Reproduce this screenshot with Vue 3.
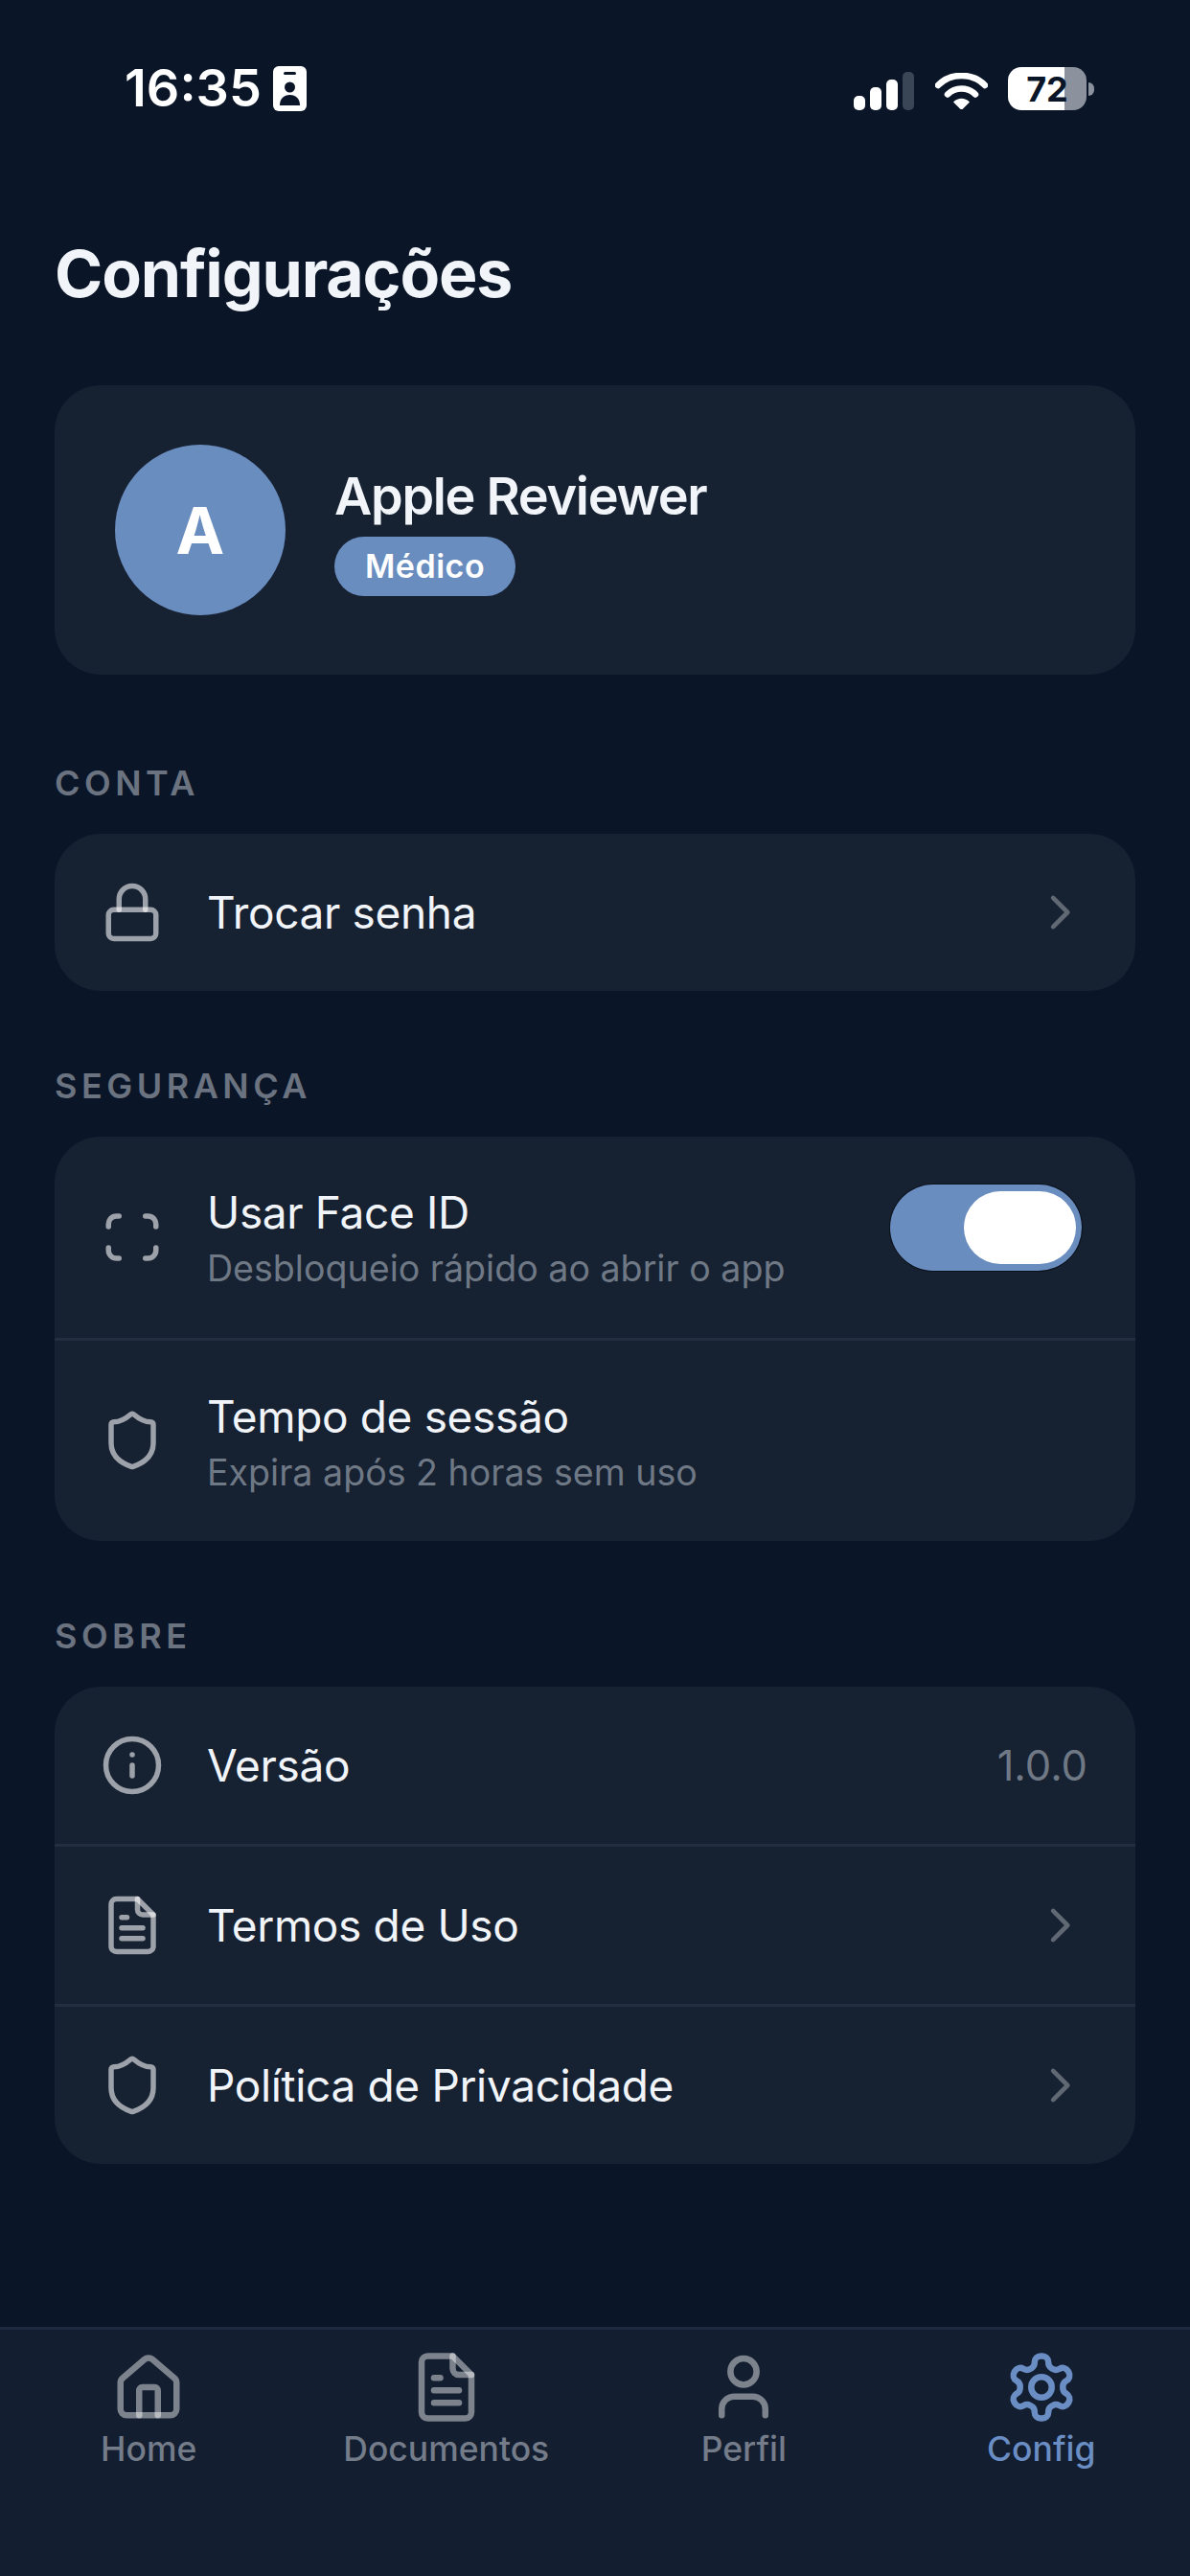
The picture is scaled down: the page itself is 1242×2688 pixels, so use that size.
<script setup>
const icons = {
  lock: ['M5 11h14a2 2 0 0 1 2 2v7a2 2 0 0 1-2 2H5a2 2 0 0 1-2-2v-7a2 2 0 0 1 2-2z', 'M7 11V7a5 5 0 0 1 10 0v4'],
  face: ['M3 8V7a3 3 0 0 1 3-3h1', 'M17 4h1a3 3 0 0 1 3 3v1', 'M21 16v1a3 3 0 0 1-3 3h-1', 'M7 20H6a3 3 0 0 1-3-3v-1'],
  shield: ['M20 13c0 5-3.5 7.5-7.66 8.95a1 1 0 0 1-.67-.01C7.5 20.5 4 18 4 13V6a1 1 0 0 1 1-1c2 0 4.5-1.2 6.24-2.72a1.17 1.17 0 0 1 1.52 0C14.51 3.81 17 5 19 5a1 1 0 0 1 1 1z'],
  info: ['M22 12a10 10 0 1 1-20 0 10 10 0 0 1 20 0z', 'M12 16v-4', 'M12 8h.01'],
  doc: ['M14 2H6a2 2 0 0 0-2 2v16a2 2 0 0 0 2 2h12a2 2 0 0 0 2-2V8z', 'M14 2v4a2 2 0 0 0 2 2h4', 'M10 9H8', 'M16 13H8', 'M16 17H8'],
  home: ['M3 10.6a2 2 0 0 1 .7-1.5l7-6a2 2 0 0 1 2.6 0l7 6a2 2 0 0 1 .7 1.5V19a2 2 0 0 1-2 2H5a2 2 0 0 1-2-2z', 'M9 21v-8a1 1 0 0 1 1-1h4a1 1 0 0 1 1 1v8'],
  user: ['M16.2 7a4.2 4.2 0 1 1-8.4 0 4.2 4.2 0 0 1 8.4 0z', 'M5 21v-2a4 4 0 0 1 4-4h6a4 4 0 0 1 4 4v2'],
  gear: ['M12.22 2h-.44a2 2 0 0 0-2 2v.18a2 2 0 0 1-1 1.73l-.43.25a2 2 0 0 1-2 0l-.15-.08a2 2 0 0 0-2.73.73l-.22.38a2 2 0 0 0 .73 2.73l.15.1a2 2 0 0 1 1 1.72v.51a2 2 0 0 1-1 1.74l-.15.09a2 2 0 0 0-.73 2.73l.22.38a2 2 0 0 0 2.73.73l.15-.08a2 2 0 0 1 2 0l.43.25a2 2 0 0 1 1 1.73V20a2 2 0 0 0 2 2h.44a2 2 0 0 0 2-2v-.18a2 2 0 0 1 1-1.73l.43-.25a2 2 0 0 1 2 0l.15.08a2 2 0 0 0 2.73-.73l.22-.39a2 2 0 0 0-.73-2.73l-.15-.08a2 2 0 0 1-1-1.74v-.5a2 2 0 0 1 1-1.74l.15-.09a2 2 0 0 0 .73-2.73l-.22-.38a2 2 0 0 0-2.73-.73l-.15.08a2 2 0 0 1-2 0l-.43-.25a2 2 0 0 1-1-1.73V4a2 2 0 0 0-2-2z', 'M15.3 12a3.3 3.3 0 1 1-6.6 0 3.3 3.3 0 0 1 6.6 0z'],
}

const sections = [
  { label: 'CONTA', rows: [{ icon: 'lock', title: 'Trocar senha', chevron: true }] },
  {
    label: 'SEGURANÇA',
    rows: [
      { icon: 'face', title: 'Usar Face ID', sub: 'Desbloqueio rápido ao abrir o app', toggle: true },
      { icon: 'shield', title: 'Tempo de sessão', sub: 'Expira após 2 horas sem uso' },
    ],
  },
  {
    label: 'SOBRE',
    rows: [
      { icon: 'info', title: 'Versão', value: '1.0.0' },
      { icon: 'doc', title: 'Termos de Uso', chevron: true },
      { icon: 'shield', title: 'Política de Privacidade', chevron: true },
    ],
  },
]

const tabs = [
  { icon: 'home', label: 'Home' },
  { icon: 'doc', label: 'Documentos' },
  { icon: 'user', label: 'Perfil' },
  { icon: 'gear', label: 'Config', active: true },
]
</script>

<template>
  <div class="page">
    <div class="status">
      <div class="status-left">
        <span class="time">16:35</span>
        <svg class="badge-id" width="35" height="47" viewBox="0 0 35 47">
          <rect width="35" height="47" rx="6" fill="#fff" />
          <rect x="11" y="6" width="13" height="3" rx="1.5" fill="#0a1628" />
          <circle cx="17.5" cy="22" r="5.5" fill="#0a1628" />
          <path d="M7 41c0-7 4-11 10.500-11S28 34 28 41z" fill="#0a1628" />
        </svg>
      </div>
      <div class="status-right">
        <svg width="63" height="40" viewBox="0 0 63 40">
          <rect x="0" y="25" width="12" height="15" rx="5" fill="#fff" />
          <rect x="17" y="16" width="12" height="24" rx="5" fill="#fff" />
          <rect x="34" y="8" width="12" height="32" rx="5" fill="#fff" />
          <rect x="51" y="0" width="12" height="40" rx="5" fill="#3a4656" />
        </svg>
        <svg class="wifi" width="55" height="38" viewBox="0 0 55 38">
          <path d="M3 13C16-0.500 39-0.500 52 13" fill="none" stroke="#fff" stroke-width="6.500" stroke-linecap="round" />
          <path d="M13 22.500c8-8 21-8 29 0" fill="none" stroke="#fff" stroke-width="6.500" stroke-linecap="round" />
          <path d="M19 30.500c5-5 12-5 17 0l-7 7a2 2 0 0 1-3 0z" fill="#fff" />
        </svg>
        <div class="battery">
          <div class="battery-body"><span>72</span></div>
          <div class="battery-cap"></div>
        </div>
      </div>
    </div>

    <main class="content">
      <h1 class="title">Configurações</h1>

      <div class="card profile">
        <div class="avatar">A</div>
        <div>
          <div class="name">Apple Reviewer</div>
          <span class="role">Médico</span>
        </div>
      </div>

      <section v-for="section in sections" :key="section.label" class="section">
        <div class="section-label">{{ section.label }}</div>
        <div class="card">
          <div v-for="row in section.rows" :key="row.title" class="row">
            <svg class="row-icon" viewBox="0 0 24 24" fill="none" stroke="#fff" stroke-opacity="0.58" stroke-width="2" stroke-linecap="round" stroke-linejoin="round">
              <path v-for="d in icons[row.icon]" :key="d" :d="d" />
            </svg>
            <div class="row-text">
              <div class="row-title">{{ row.title }}</div>
              <div v-if="row.sub" class="row-sub">{{ row.sub }}</div>
            </div>
            <div v-if="row.toggle" class="toggle"><div class="thumb"></div></div>
            <span v-if="row.value" class="row-value">{{ row.value }}</span>
            <svg v-if="row.chevron" class="chevron" viewBox="0 0 24 24" fill="none" stroke="#fff" stroke-opacity="0.32" stroke-width="1.7" stroke-linecap="round" stroke-linejoin="round">
              <path d="m9.500 17.500 5.500-5.500-5.500-5.500" />
            </svg>
          </div>
        </div>
      </section>
    </main>

    <nav class="tabbar">
      <div v-for="tab in tabs" :key="tab.label" class="tab" :class="{ active: tab.active }">
        <svg class="tab-icon" viewBox="0 0 24 24" fill="none" stroke="currentColor" :stroke-opacity="tab.active ? 1 : 0.45" stroke-width="2" stroke-linecap="round" stroke-linejoin="round">
          <path v-for="d in icons[tab.icon]" :key="d" :d="d" />
        </svg>
        <span class="tab-label">{{ tab.label }}</span>
      </div>
    </nav>
  </div>
</template>

<style>
html,
body {
  margin: 0;
  background: #0a1628;
}
</style>

<style scoped>
.page {
  height: 2688px;
  display: flex;
  flex-direction: column;
  background: #0a1628;
  color: #f1f4f8;
  font-family: Inter, "Liberation Sans", sans-serif;
}

.status {
  height: 138px;
  padding: 67px 100px 0 130px;
  box-sizing: border-box;
  display: flex;
  justify-content: space-between;
  align-items: flex-start;
}

.status-left {
  display: flex;
  align-items: center;
  gap: 12px;
}

.time {
  color: #fff;
  font-size: 54px;
  font-weight: 600;
  line-height: 50px;
}

.status-right {
  display: flex;
  align-items: flex-end;
  height: 48px;
}

.wifi {
  margin-left: 22px;
  margin-bottom: 1px;
}

.battery {
  display: flex;
  align-items: center;
  margin-left: 21px;
}

.battery-body {
  width: 82px;
  height: 45px;
  border-radius: 14px;
  background: linear-gradient(90deg, #fff 72%, #8b919d 72%);
  display: flex;
  align-items: center;
  justify-content: center;
  color: #0a1628;
  font-size: 36px;
  font-weight: 700;
}

.battery-cap {
  width: 6px;
  height: 14px;
  margin-left: 2px;
  border-radius: 0 6px 6px 0;
  background: #8b919d;
}

.content {
  padding: 0 57px;
}

.title {
  margin: 102px 0 0;
  font-size: 68px;
  line-height: 90px;
  font-weight: 700;
  letter-spacing: -1.15px;
}

.card {
  background: #162132;
  border-radius: 48px;
  overflow: hidden;
}

.profile {
  margin-top: 72px;
  margin-bottom: 91px;
  height: 302px;
  padding: 0 63px;
  box-sizing: border-box;
  display: flex;
  align-items: center;
  gap: 51px;
}

.avatar {
  width: 178px;
  height: 178px;
  border-radius: 50%;
  background: #6a8dbf;
  color: #fff;
  font-size: 68px;
  font-weight: 700;
  display: flex;
  align-items: center;
  justify-content: center;
}

.name {
  font-size: 54px;
  line-height: 66px;
  font-weight: 600;
  letter-spacing: -1.3px;
}

.role {
  display: inline-block;
  margin-top: 9px;
  padding: 0 32px;
  height: 62px;
  line-height: 62px;
  border-radius: 31px;
  background: #6a8dbf;
  color: #fff;
  font-size: 34px;
  font-weight: 600;
  letter-spacing: 0.5px;
}

.section {
  margin-bottom: 77px;
}

.section-label {
  margin-bottom: 31px;
  font-size: 36px;
  line-height: 44px;
  font-weight: 600;
  letter-spacing: 4.5px;
  color: #6b7380;
}

.row {
  min-height: 164px;
  padding: 0 48px;
  display: flex;
  align-items: center;
  gap: 45px;
}

.row + .row {
  border-top: 3px solid #232f40;
}

.row-icon {
  width: 66px;
  height: 66px;
  flex: none;
}

.row-text {
  flex: 1;
  padding: 46px 0;
}

.row-title {
  font-size: 46px;
  line-height: 66px;
  letter-spacing: -0.35px;
  color: #f1f4f8;
}

.row-sub {
  margin-top: 2px;
  margin-bottom: 2px;
  font-size: 37.6px;
  line-height: 47.5px;
  color: #6f7885;
}

.row-value {
  margin-right: 2px;
  font-size: 43.5px;
  color: #6f7885;
}

.toggle {
  width: 200px;
  height: 90px;
  margin: 0 8px 20px 0;
  padding: 7px 6px;
  box-sizing: border-box;
  border-radius: 45px;
  background: #6a8dbf;
  box-shadow: 0 0 0 1px #0b111b;
  display: flex;
  justify-content: flex-end;
}

.thumb {
  width: 117px;
  height: 76px;
  border-radius: 38px;
  background: #fff;
}

.chevron {
  width: 66px;
  height: 66px;
  margin-right: -2px;
  flex: none;
}

.tabbar {
  margin-top: auto;
  height: 260px;
  box-sizing: border-box;
  padding-top: 21px;
  background: #131e30;
  border-top: 3px solid #1c2940;
  display: grid;
  grid-template-columns: repeat(4, 1fr);
}

.tab {
  display: flex;
  flex-direction: column;
  align-items: center;
  color: #fff;
}

.tab-icon {
  width: 78px;
  height: 78px;
}

.tab-label {
  margin-top: 4px;
  font-size: 35.5px;
  line-height: 44px;
  font-weight: 500;
  color: #747c8a;
}

.tab.active {
  color: #6a8dc4;
}

.tab.active .tab-label {
  color: #6a8dc4;
}
</style>
